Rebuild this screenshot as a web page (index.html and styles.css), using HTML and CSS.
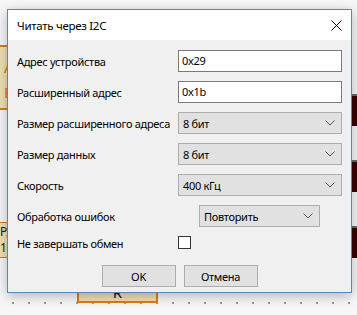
FILE: index.html
```html
<!DOCTYPE html>
<html lang="ru">
<head>
  <meta charset="UTF-8" />
  <title>Читать через I2C</title>
  <link rel="stylesheet" href="styles.css">
</head>
<body>
  <div class="canvas">
    <!-- элементы схемы за окном -->
    <div class="block block-left"><span>А</span><span>В</span></div>
    <div class="block block-small"><span>Рд</span><span>11</span></div>
    <div class="block block-r">R</div>
    <div class="side">
      <div class="side-cell"></div>
      <div class="side-cell"></div>
      <div class="side-cell"></div>
    </div>

    <div class="dialog">
      <div class="titlebar">
        <span class="title">Читать через I2C</span>
        <svg class="close" width="11" height="11" viewBox="0 0 11 11">
          <path d="M0.5 0.5 L10.5 10.5 M10.5 0.5 L0.5 10.5" stroke="#000" stroke-width="1" fill="none"/>
        </svg>
      </div>

      <div class="content">
        <div class="row">
          <label class="label">Адрес устройства</label>
          <div class="input">0x29</div>
        </div>
        <div class="row">
          <label class="label">Расширенный адрес</label>
          <div class="input">0x1b</div>
        </div>
        <div class="row">
          <label class="label">Размер расширенного адреса</label>
          <div class="select"><span>8 бит</span><svg width="10" height="6" viewBox="0 0 10 6"><path d="M0.5 0.5 L5 5 L9.5 0.5" stroke="#555" fill="none"/></svg></div>
        </div>
        <div class="row">
          <label class="label">Размер данных</label>
          <div class="select"><span>8 бит</span><svg width="10" height="6" viewBox="0 0 10 6"><path d="M0.5 0.5 L5 5 L9.5 0.5" stroke="#555" fill="none"/></svg></div>
        </div>
        <div class="row">
          <label class="label">Скорость</label>
          <div class="select"><span>400 кГц</span><svg width="10" height="6" viewBox="0 0 10 6"><path d="M0.5 0.5 L5 5 L9.5 0.5" stroke="#555" fill="none"/></svg></div>
        </div>
        <div class="row">
          <label class="label">Обработка ошибок</label>
          <div class="select select-short"><span>Повторить</span><svg width="10" height="6" viewBox="0 0 10 6"><path d="M0.5 0.5 L5 5 L9.5 0.5" stroke="#555" fill="none"/></svg></div>
        </div>
        <div class="row row-check">
          <label class="label">Не завершать обмен</label>
          <div class="checkbox"></div>
        </div>
        <div class="buttons">
          <button class="btn">OK</button>
          <button class="btn">Отмена</button>
        </div>
      </div>
    </div>
  </div>
</body>
</html>
```

FILE: styles.css
```css
* {
  box-sizing: border-box;
}
body {
  margin: 0;
  font-family: "Noto Sans", "Liberation Sans", sans-serif;
  font-size: 11px;
  letter-spacing: -0.3px;
}

.canvas {
  position: relative;
  width: 357px;
  height: 315px;
  overflow: hidden;
  background-color: #f7f7f7;
  background-image: radial-gradient(circle, #9a9a9a 0.8px, transparent 1px);
  background-size: 16px 16px;
  background-position: 5px 295px;
}

.block {
  position: absolute;
  background: #efdfb3;
  border: 2px solid #e27b12;
  color: #e27b12;
  display: flex;
  flex-direction: column;
  letter-spacing: 0;
}
.block-left {
  left: -40px;
  top: 45px;
  width: 60px;
  height: 65px;
  padding: 12px 0 0 42px;
  gap: 8px;
  font-size: 15px;
  line-height: 17px;
}
.block-small {
  left: -30px;
  top: 222px;
  width: 50px;
  height: 36px;
  border-width: 1px;
  padding: 2px 0 0 29px;
  gap: 3px;
  color: #222;
  font-size: 12px;
  line-height: 13px;
}
.block-r {
  left: 77px;
  top: 280px;
  width: 81px;
  height: 23px;
  align-items: center;
  justify-content: flex-end;
  color: #111;
  font-size: 15px;
  line-height: 16px;
  padding-bottom: 1px;
}

.side {
  position: absolute;
  left: 340px;
  top: 94px;
  width: 30px;
  display: flex;
  flex-direction: column;
  gap: 34px;
}
.side-cell {
  height: 32px;
  background: #3a0202;
  border-top: 2px solid #6a6a6a;
}

.dialog {
  position: absolute;
  left: 7px;
  top: 9px;
  width: 345px;
  height: 284px;
  background: #f0f0f0;
  border: 1px solid #4f8ac7;
  box-shadow: 0 3px 12px rgba(0,0,0,0.28);
  display: flex;
  flex-direction: column;
}

.titlebar {
  height: 30px;
  background: #ffffff;
  display: flex;
  align-items: center;
  justify-content: space-between;
  padding: 0 9px 0 9px;
}
.title {
  color: #000;
  font-size: 11.5px;
}
.close {
  display: block;
  margin-top: 1px;
}

.content {
  display: flex;
  flex-direction: column;
  gap: 9px;
  padding: 10px 9px 0 9px;
}

.row {
  display: flex;
  align-items: center;
  height: 22px;
}
.row-check {
  height: 13px;
}
.label {
  width: 161px;
  flex-shrink: 0;
  white-space: nowrap;
  color: #000;
  padding-top: 1px;
}

.input {
  width: 164px;
  height: 22px;
  background: #fff;
  border: 1px solid #7a7a7a;
  padding: 0 3px;
  line-height: 20px;
  color: #000;
}

.select {
  width: 164px;
  height: 22px;
  background: #e1e1e1;
  border: 1px solid #adadad;
  display: flex;
  align-items: center;
  justify-content: space-between;
  padding: 0 6px 0 4px;
  color: #000;
}
.select svg {
  display: block;
}
.select-short {
  width: 121px;
  margin-left: 21px;
}

.checkbox {
  width: 13px;
  height: 13px;
  background: #fff;
  border: 1px solid #333;
}

.buttons {
  display: flex;
  justify-content: center;
  gap: 8px;
  margin-top: 7px;
}
.btn {
  width: 74px;
  height: 22px;
  background: #e1e1e1;
  border: 1px solid #adadad;
  font-family: inherit;
  font-size: 11px;
  letter-spacing: -0.3px;
  color: #000;
  padding: 0;
}
```
